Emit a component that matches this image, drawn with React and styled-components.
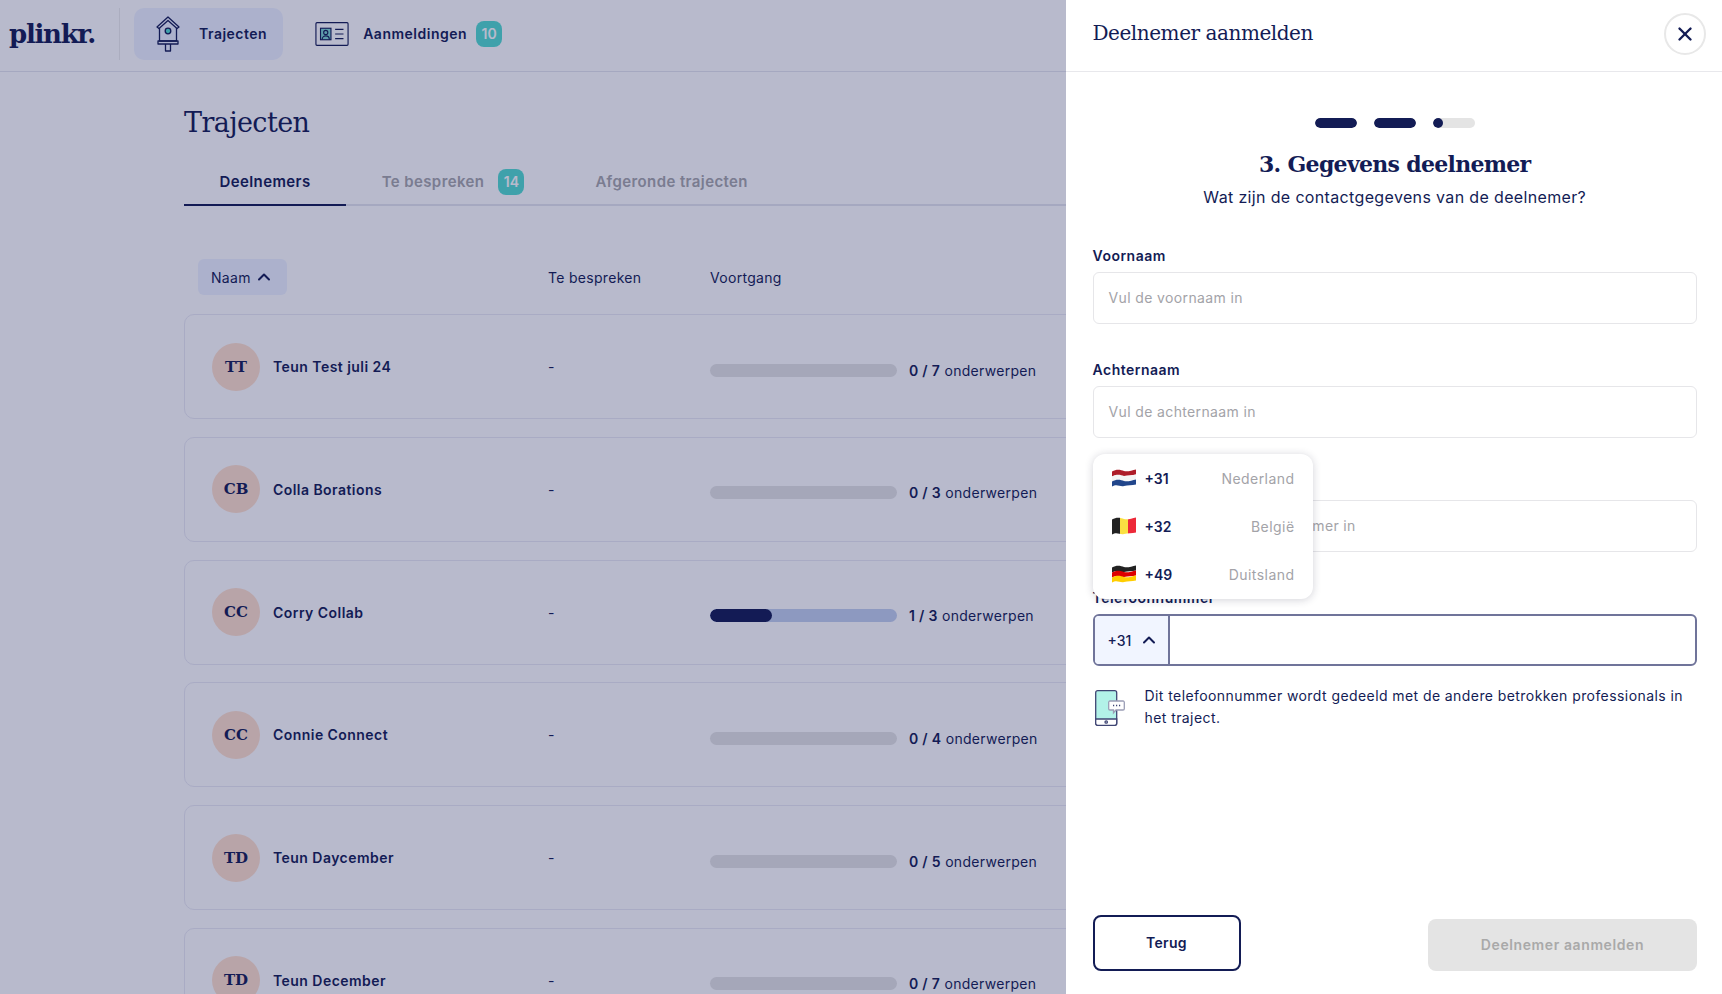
import React from "react";
import styled, { createGlobalStyle } from "styled-components";
import { ChevronUp, X } from "lucide-react";

const navy = "#131c55";
const bodyFont = `"Inter", "Open Sans", sans-serif`;
const slabFont = `"DejaVu Serif", "Liberation Serif", serif`;

const Global = createGlobalStyle`
  * { box-sizing: border-box; }
  html, body { margin: 0; height: 100%; overflow: hidden; }
  body { font-family: ${bodyFont}; color: ${navy}; background: #fff; letter-spacing: 0.3px; }
`;

const Screen = styled.div`
  position: relative;
  width: 1722px;
  height: 994px;
  overflow: hidden;
`;

const TopBar = styled.header`
  display: flex;
  align-items: center;
  height: 72px;
  padding: 0 0 4px 9px;
  border-bottom: 1px solid #e4e5ee;
`;

const Logo = styled.div`
  width: 86px;
  font-family: ${slabFont};
  font-size: 26px;
  font-weight: 700;
  letter-spacing: -1.3px;
`;

const Divider = styled.div`
  width: 1px;
  height: 52px;
  margin: 0 14px 0 24px;
  background: #eceded;
`;

const NavItem = styled.div`
  display: flex;
  align-items: center;
  height: 52px;
  border-radius: 10px;
  font-size: 14px;
  font-weight: 600;
  background: ${(p) => (p.$active ? "#eef3ff" : "transparent")};
  padding: ${(p) => (p.$active ? "0 16px 0 22px" : "0")};
  gap: ${(p) => (p.$active ? "19px" : "14px")};
  margin-left: ${(p) => (p.$active ? "0" : "32px")};
`;

const NavLabel = styled.span`
  display: flex;
  align-items: center;
  gap: 9px;
  letter-spacing: 0.5px;
`;

const Badge = styled.span`
  display: inline-flex;
  align-items: center;
  justify-content: center;
  width: 26px;
  height: 26px;
  border-radius: 8px;
  background: #52dcd0;
  color: #fff;
  font-size: 14px;
  font-weight: 600;
  letter-spacing: 0;
`;

const Main = styled.main`
  padding: 0 0 0 184px;
  width: 1540px;
`;

const Title = styled.h1`
  margin: 33px 0 0;
  font-family: ${slabFont};
  font-size: 27px;
  line-height: 36px;
  font-weight: 400;
  letter-spacing: -0.6px;
`;

const Tabs = styled.div`
  display: flex;
  height: 49px;
  margin-top: 16px;
  border-bottom: 2px solid #e4e5ee;
`;

const Tab = styled.div`
  display: flex;
  align-items: center;
  justify-content: center;
  gap: 14px;
  height: 49px;
  padding: 2px 35.5px 0;
  font-size: 15px;
  font-weight: 600;
  letter-spacing: 0.4px;
  color: ${(p) => (p.$active ? navy : "#a6a6aa")};
  border-bottom: 2px solid ${(p) => (p.$active ? navy : "transparent")};
`;

const Columns = styled.div`
  display: grid;
  grid-template-columns: 350px 162px 1fr;
  align-items: center;
  height: 36px;
  margin-top: 53px;
  padding-left: 14px;
  font-size: 14px;
`;

const SortButton = styled.div`
  display: inline-flex;
  align-items: center;
  justify-self: start;
  gap: 3px;
  height: 36px;
  padding: 0 13px 0 13px;
  border-radius: 6px;
  background: #eef3ff;
`;

const List = styled.div`
  display: flex;
  flex-direction: column;
  gap: 17.75px;
  margin-top: 19px;
`;

const Card = styled.div`
  display: grid;
  grid-template-columns: 336px 162px 1fr;
  align-items: center;
  flex: none;
  height: 105px;
  padding-left: 27px;
  border: 1px solid #eaeaf4;
  border-radius: 10px;
  font-size: 14px;
`;

const Person = styled.div`
  display: flex;
  align-items: center;
  gap: 13px;
  font-weight: 600;
  letter-spacing: 0.45px;
`;

const Avatar = styled.div`
  display: flex;
  align-items: center;
  justify-content: center;
  width: 48px;
  height: 48px;
  border-radius: 50%;
  background: #ffe0cc;
  font-family: ${slabFont};
  font-size: 15px;
  font-weight: 700;
  letter-spacing: 0;
`;

const Progress = styled.div`
  display: flex;
  align-items: center;
  gap: 12px;
  padding-top: 7px;
  white-space: nowrap;
`;

const Track = styled.div`
  width: 187px;
  height: 13px;
  border-radius: 7px;
  overflow: hidden;
  background: ${(p) => (p.$started ? "#c2d0ee" : "#e4e4e4")};
`;

const Fill = styled.div`
  height: 100%;
  border-radius: 7px;
  background: ${navy};
`;

const Count = styled.b`
  font-weight: 600;
`;

const Overlay = styled.div`
  position: absolute;
  inset: 0;
  background: rgba(19, 28, 85, 0.3);
`;

const Drawer = styled.aside`
  position: absolute;
  top: 0;
  right: 0;
  bottom: 0;
  display: flex;
  flex-direction: column;
  width: 656px;
  background: #fff;
`;

const DrawerHead = styled.div`
  display: flex;
  align-items: center;
  justify-content: space-between;
  flex: none;
  height: 72px;
  padding: 0 16px 4px 26.5px;
  border-bottom: 1px solid #e8e8ec;
`;

const DrawerTitle = styled.h2`
  margin: 0 0 2px;
  font-family: ${slabFont};
  font-size: 20px;
  font-weight: 400;
  letter-spacing: -0.45px;
`;

const CloseButton = styled.div`
  display: flex;
  align-items: center;
  justify-content: center;
  width: 42px;
  height: 42px;
  border: 2px solid #e8e8e8;
  border-radius: 50%;
`;

const DrawerBody = styled.div`
  display: flex;
  flex: 1;
  flex-direction: column;
  padding: 46px 25px 23px 26.5px;
`;

const Steps = styled.div`
  display: flex;
  justify-content: center;
  gap: 17px;
`;

const Step = styled.div`
  width: 42px;
  height: 10px;
  border-radius: 5px;
  background: #e4e4e4;
  overflow: hidden;
  &::before {
    content: "";
    display: block;
    width: ${(p) => (p.$partial ? "10px" : "100%")};
    height: 100%;
    border-radius: 5px;
    background: ${navy};
  }
`;

const StepTitle = styled.h3`
  margin: 20px 0 0;
  text-align: center;
  font-family: ${slabFont};
  font-size: 22px;
  line-height: 32px;
  font-weight: 700;
  letter-spacing: -0.7px;
`;

const StepSub = styled.p`
  margin: 6px 0 0;
  text-align: center;
  font-size: 16px;
  line-height: 22px;
  letter-spacing: 0.35px;
`;

const Form = styled.form`
  position: relative;
  display: flex;
  flex-direction: column;
  gap: 37px;
  margin-top: 39px;
`;

const Field = styled.div`
  display: flex;
  flex-direction: column;
  gap: 7px;
`;

const Label = styled.label`
  font-size: 14px;
  line-height: 18px;
  font-weight: 600;
  letter-spacing: 0.5px;
`;

const TextInput = styled.div`
  display: flex;
  align-items: center;
  height: 52px;
  padding: 0 15px 2px;
  border: 1px solid #e6e6e9;
  border-radius: 6px;
  font-size: 14px;
  letter-spacing: 0.37px;
  color: #a3a3a8;
`;

const PhoneInput = styled.div`
  display: flex;
  height: 52px;
  border: 2px solid #70749a;
  border-radius: 6px;
  overflow: hidden;
`;

const Prefix = styled.div`
  display: flex;
  align-items: center;
  gap: 8px;
  width: 75px;
  padding-left: 13px;
  border-right: 2px solid #70749a;
  background: #f1f5ff;
  font-size: 14px;
  font-weight: 500;
  letter-spacing: 0;
`;

const Menu = styled.div`
  position: absolute;
  top: 207px;
  left: 0;
  width: 220px;
  padding-bottom: 1px;
  border-radius: 12px;
  background: #fff;
  box-shadow: 0 1px 8px rgba(30, 30, 60, 0.2);
`;

const MenuRow = styled.div`
  display: flex;
  align-items: center;
  height: 48px;
  padding: 0 18px 0 19px;
  font-size: 14px;
  font-weight: 600;
  letter-spacing: 0;
`;

const Code = styled.span`
  margin-left: 9px;
`;

const Country = styled.span`
  margin-left: auto;
  font-weight: 400;
  letter-spacing: 0.45px;
  color: #a3a3a8;
`;

const Note = styled.div`
  display: flex;
  align-items: flex-start;
  gap: 20px;
  margin-top: 19px;
  padding-left: 2px;
  font-size: 14px;
  line-height: 22px;
  letter-spacing: 0.42px;
  svg {
    flex: none;
    margin-top: 5px;
  }
`;

const Footer = styled.div`
  display: flex;
  align-items: flex-end;
  justify-content: space-between;
  margin-top: auto;
`;

const BackButton = styled.div`
  display: flex;
  align-items: center;
  justify-content: center;
  width: 148px;
  height: 56px;
  padding-bottom: 2px;
  border: 2px solid ${navy};
  border-radius: 8px;
  font-size: 14px;
  font-weight: 600;
`;

const SubmitButton = styled.div`
  display: flex;
  align-items: center;
  justify-content: center;
  width: 269px;
  height: 52px;
  padding-bottom: 2px;
  border-radius: 8px;
  background: #e4e4e4;
  color: #a9a9a9;
  font-size: 14px;
  font-weight: 600;
  letter-spacing: 0.6px;
`;

const Birdhouse = () => (
  <svg width="24" height="36" viewBox="0 0 24 36" fill="none" stroke={navy} strokeWidth="1.3" strokeLinejoin="round">
    <path d="M1 11 12 1l11 10-2 1.6L12 4.5 3 12.6z" fill="#eef3ff" />
    <path d="M3.5 12v13h17V12" />
    <circle cx="12" cy="15" r="2.8" fill="#52dcd0" />
    <path d="M2 25h20v3H2z" />
    <path d="M9.5 28v7h5v-7" />
  </svg>
);

const IdCard = () => (
  <svg width="34" height="24" viewBox="0 0 32 23" fill="none" stroke={navy} strokeWidth="1.1">
    <rect x="0.6" y="0.6" width="30.8" height="21.8" rx="1" />
    <rect x="5" y="6" width="10" height="11" fill="#7fd6d2" />
    <circle cx="10" cy="10" r="2" />
    <path d="M6.5 17c0-5 7-5 7 0" />
    <path d="M19 7h8M19 11.500h8M19 16h8" />
  </svg>
);

const PhoneIcon = () => (
  <svg width="30" height="36" viewBox="0 0 30 36" fill="none" stroke="#3f4573" strokeWidth="1.3">
    <rect x="0.7" y="0.7" width="21" height="34.600" rx="2" fill="#b2f2e8" />
    <path d="M.7 29h21v4.300a2 2 0 0 1-2 2h-17a2 2 0 0 1-2-2z" fill="#fff" />
    <circle cx="11.200" cy="32" r="1.200" />
    <path d="M15 11h13a1.300 1.300 0 0 1 1.300 1.300v6.400A1.300 1.300 0 0 1 28 20h-7l-2.500 2.800V20H15a1.300 1.300 0 0 1-1.300-1.300v-6.400A1.300 1.300 0 0 1 15 11z" fill="#fff" stroke="#9a9db5" />
    <path d="M18 15.500h1.200M21 15.500h1.200M24 15.500h1.200" stroke="#3f4573" />
  </svg>
);

// wavy little flags, the bands follow the same curve as the top edge
const bandPath = (y, h) =>
  `M0 ${y + 2}C5 ${y - 1} 9 ${y + 0.5} 12 ${y + 1.5}S20 ${y + 1} 24 ${y}V${y + h}C20 ${y + h + 1} 16 ${y + h + 0.5} 12 ${y + h + 1.5}S5 ${y + h - 1} 0 ${y + h + 2}Z`;

const Flag = ({ colors, vertical, id }) => (
  <svg width="24" height="18" viewBox="0 0 24 18">
    <clipPath id={id}>
      <path d={bandPath(0.5, 15)} />
    </clipPath>
    {vertical ? (
      <g clipPath={`url(#${id})`}>
        {colors.map((c, i) => (
          <rect key={c} x={i * 8} y="0" width="8" height="18" fill={c} />
        ))}
      </g>
    ) : (
      colors.map((c, i) => <path key={c} d={bandPath(0.5 + i * 5, 5)} fill={c} />)
    )}
  </svg>
);

const deelnemers = [
  { initials: "TT", name: "Teun Test juli 24", done: 0, total: 7 },
  { initials: "CB", name: "Colla Borations", done: 0, total: 3 },
  { initials: "CC", name: "Corry Collab", done: 1, total: 3 },
  { initials: "CC", name: "Connie Connect", done: 0, total: 4 },
  { initials: "TD", name: "Teun Daycember", done: 0, total: 5 },
  { initials: "TD", name: "Teun December", done: 0, total: 7 },
];

const landen = [
  { code: "+31", name: "Nederland", colors: ["#ae1c28", "#f4f4f4", "#21468b"] },
  { code: "+32", name: "België", colors: ["#222", "#fae042", "#ed2939"], vertical: true },
  { code: "+49", name: "Duitsland", colors: ["#222", "#dd0000", "#ffce00"] },
];

const App = () => {
  return (
    <Screen>
      <Global />
      <TopBar>
        <Logo>plinkr.</Logo>
        <Divider />
        <NavItem $active>
          <Birdhouse />
          <NavLabel>Trajecten</NavLabel>
        </NavItem>
        <NavItem>
          <IdCard />
          <NavLabel>
            Aanmeldingen
            <Badge>10</Badge>
          </NavLabel>
        </NavItem>
      </TopBar>

      <Main>
        <Title>Trajecten</Title>
        <Tabs>
          <Tab $active>Deelnemers</Tab>
          <Tab>
            Te bespreken <Badge>14</Badge>
          </Tab>
          <Tab>Afgeronde trajecten</Tab>
        </Tabs>
        <Columns>
          <SortButton>
            Naam <ChevronUp size={20} strokeWidth={2.4} />
          </SortButton>
          <span>Te bespreken</span>
          <span>Voortgang</span>
        </Columns>
        <List>
          {deelnemers.map((d) => (
            <Card key={d.name}>
              <Person>
                <Avatar>{d.initials}</Avatar>
                {d.name}
              </Person>
              <span>-</span>
              <Progress>
                <Track $started={d.done > 0}>
                  <Fill style={{ width: `${(d.done / d.total) * 100}%` }} />
                </Track>
                <span>
                  <Count>
                    {d.done} / {d.total}
                  </Count>{" "}
                  onderwerpen
                </span>
              </Progress>
            </Card>
          ))}
        </List>
      </Main>

      <Overlay />

      <Drawer>
        <DrawerHead>
          <DrawerTitle>Deelnemer aanmelden</DrawerTitle>
          <CloseButton>
            <X size={22} strokeWidth={2.6} />
          </CloseButton>
        </DrawerHead>
        <DrawerBody>
          <Steps>
            <Step />
            <Step />
            <Step $partial />
          </Steps>
          <StepTitle>3. Gegevens deelnemer</StepTitle>
          <StepSub>Wat zijn de contactgegevens van de deelnemer?</StepSub>
          <Form>
            <Field>
              <Label>Voornaam</Label>
              <TextInput>Vul de voornaam in</TextInput>
            </Field>
            <Field>
              <Label>Achternaam</Label>
              <TextInput>Vul de achternaam in</TextInput>
            </Field>
            <Field>
              <Label>E-mailadres</Label>
              <TextInput>Vul hier e-mail van de deelnemer in</TextInput>
            </Field>
            <Field>
              <Label>Telefoonnummer</Label>
              <PhoneInput>
                <Prefix>
                  +31 <ChevronUp size={20} strokeWidth={2.4} />
                </Prefix>
              </PhoneInput>
            </Field>
            <Menu>
              {landen.map((l) => (
                <MenuRow key={l.code}>
                  <Flag colors={l.colors} vertical={l.vertical} id={`flag${l.code.slice(1)}`} />
                  <Code>{l.code}</Code>
                  <Country>{l.name}</Country>
                </MenuRow>
              ))}
            </Menu>
          </Form>
          <Note>
            <PhoneIcon />
            <span>
              Dit telefoonnummer wordt gedeeld met de andere betrokken professionals in het traject.
            </span>
          </Note>
          <Footer>
            <BackButton>Terug</BackButton>
            <SubmitButton>Deelnemer aanmelden</SubmitButton>
          </Footer>
        </DrawerBody>
      </Drawer>
    </Screen>
  );
};

export default App;
